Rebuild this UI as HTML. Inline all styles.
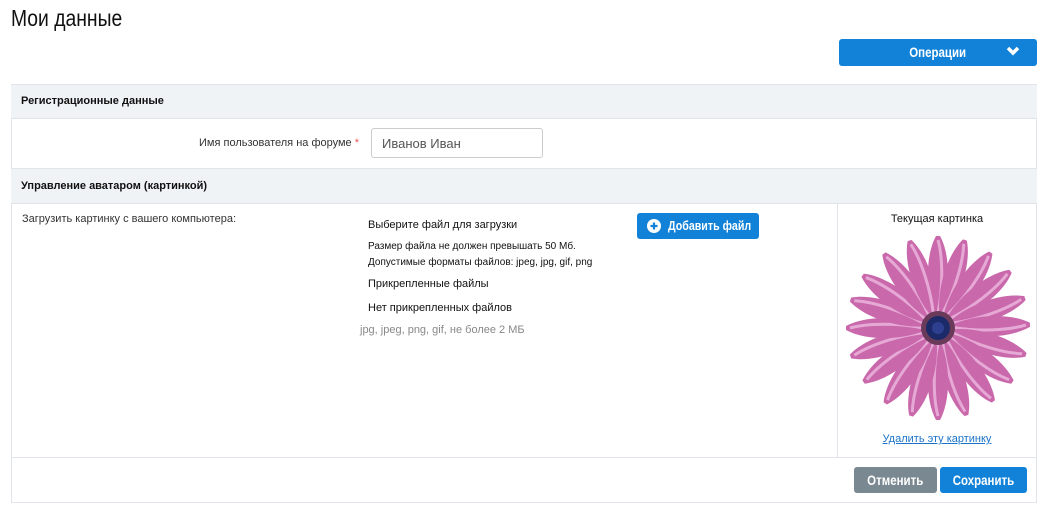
<!DOCTYPE html>
<html><head><meta charset="utf-8"><style>
*{box-sizing:border-box;margin:0;padding:0}
body{width:1056px;height:512px;background:#fff;font-family:"Liberation Sans",sans-serif;color:#111;position:relative;overflow:hidden}
.a{position:absolute}
.n{white-space:nowrap}
.s{display:inline-block;transform:scaleX(.82);transform-origin:center}
.hdr{background:#f0f3f6;border-top:1px solid #e1e5ea;border-bottom:1px solid #e1e5ea;left:11px;width:1026px;font-size:11px;font-weight:bold;padding-left:10px}
.btn{background:#1282d8;color:#fff;border-radius:3px;font-weight:bold;text-align:center}
</style></head><body>
<div class="a n" style="left:11px;top:5px;font-size:23px;transform:scaleX(.84);transform-origin:left">Мои данные</div>
<div class="a btn n" style="left:839px;top:39px;width:198px;height:27px;font-size:14px;line-height:27px"><span class="s">Операции</span>
<svg class="a" style="left:167px;top:7px" width="14" height="11" viewBox="0 0 14 11"><path d="M2 2 L7 7 L12 2" stroke="#fff" stroke-width="3.5" fill="none"/></svg></div>
<div class="a" style="left:11px;top:84px;width:1026px;height:419px;border:1px solid #e1e5ea"></div>
<div class="a hdr" style="top:84px;height:35px;line-height:33px">Регистрационные данные</div>
<div class="a" style="left:0;width:359px;top:137px;text-align:right;font-size:11px;color:#333">Имя пользователя на форуме <span style="color:#e55">*</span></div>
<div class="a" style="left:371px;top:128px;width:172px;height:30px;border:1px solid #ccc;border-radius:3px;font-size:13px;color:#555;padding:7px 10px">Иванов Иван</div>
<div class="a hdr" style="top:168px;height:36px;line-height:35px">Управление аватаром (картинкой)</div>
<div class="a" style="left:22px;top:213px;font-size:11px;color:#333">Загрузить картинку с вашего компьютера:</div>
<div class="a" style="left:368px;top:219px;font-size:11px">Выберите файл для загрузки</div>
<div class="a" style="left:368px;top:241px;font-size:10px">Размер файла не должен превышать 50 Мб.</div>
<div class="a" style="left:368px;top:257px;font-size:10px">Допустимые форматы файлов: jpeg, jpg, gif, png</div>
<div class="a" style="left:368px;top:278px;font-size:11px">Прикрепленные файлы</div>
<div class="a" style="left:368px;top:302px;font-size:11px">Нет прикрепленных файлов</div>
<div class="a" style="left:360px;top:324px;font-size:11px;color:#888">jpg, jpeg, png, gif, не более 2 МБ</div>
<div class="a btn n" style="left:637px;top:213px;width:122px;height:26px;font-size:13px;line-height:26px;text-align:left;padding-left:31px"><span class="s" style="transform-origin:left">Добавить файл</span>
<svg class="a" style="left:10px;top:6px" width="14" height="14"><circle cx="7" cy="7" r="7" fill="#fff"/><path d="M7 3.5V10.5M3.5 7H10.5" stroke="#1282d8" stroke-width="2.2"/></svg></div>
<div class="a" style="left:837px;top:203px;width:1px;height:254px;background:#e1e5ea"></div>
<div class="a" style="left:838px;top:213px;width:198px;text-align:center;font-size:11px">Текущая картинка</div>
<svg class="a" style="left:845px;top:235px" width="186" height="186" viewBox="-93 -93 186 186">
<g id="p">
<path d="M0 -8 C12 -30 14 -70 2 -92 L-2 -92 C-14 -70 -12 -30 0 -8Z" fill="#c968ab"/>
<path d="M0 -15 C5 -40 5 -70 0 -88" stroke="#e6a9d6" stroke-width="3" fill="none"/>
</g>
<use href="#p" transform="rotate(17)"/><use href="#p" transform="rotate(35)"/><use href="#p" transform="rotate(52)"/><use href="#p" transform="rotate(71)"/><use href="#p" transform="rotate(88)"/><use href="#p" transform="rotate(107)"/><use href="#p" transform="rotate(126)"/><use href="#p" transform="rotate(143)"/><use href="#p" transform="rotate(162)"/><use href="#p" transform="rotate(180)"/><use href="#p" transform="rotate(197)"/><use href="#p" transform="rotate(215)"/><use href="#p" transform="rotate(234)"/><use href="#p" transform="rotate(252)"/><use href="#p" transform="rotate(270)"/><use href="#p" transform="rotate(288)"/><use href="#p" transform="rotate(305)"/><use href="#p" transform="rotate(324)"/><use href="#p" transform="rotate(342)"/>
<circle r="17" fill="#6a3a5a"/><circle r="12" fill="#1c2a6a"/><circle r="6" fill="#2e3f8f"/>
</svg>
<div class="a" style="left:838px;top:433px;width:198px;text-align:center;font-size:11px;color:#1a73c8;text-decoration:underline">Удалить эту картинку</div>
<div class="a" style="left:11px;top:457px;width:1026px;height:1px;background:#e1e5ea"></div>
<div class="a btn n" style="left:854px;top:467px;width:83px;height:26px;line-height:26px;font-size:14px;background:#7a8891"><span class="s">Отменить</span></div>
<div class="a btn n" style="left:940px;top:467px;width:87px;height:26px;line-height:26px;font-size:14px"><span class="s">Сохранить</span></div>
</body></html>
